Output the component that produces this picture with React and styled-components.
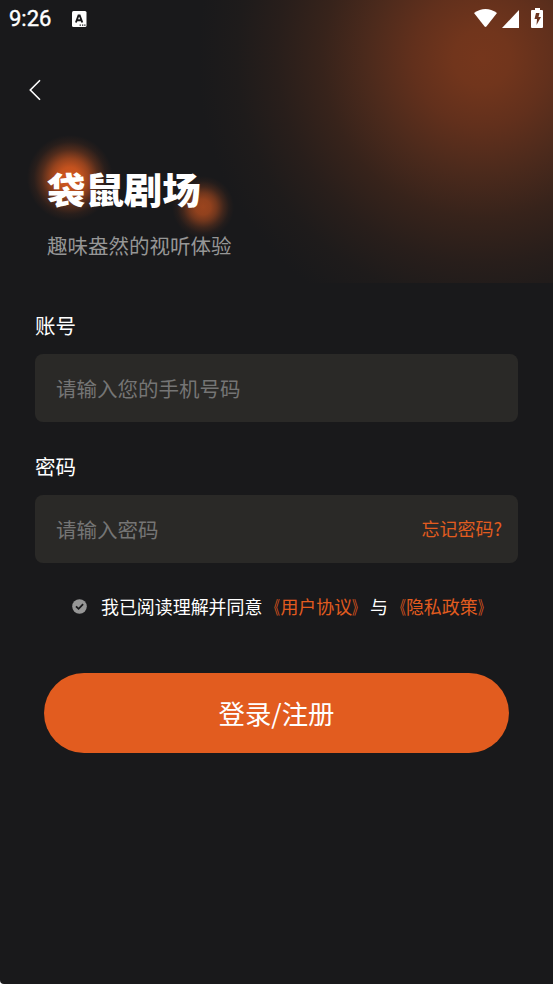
import React, { useState } from 'react';
import styled, { createGlobalStyle } from 'styled-components';

const GlobalStyle = createGlobalStyle`
  * {
    box-sizing: border-box;
  }

  body {
    margin: 0;
    background-color: #fff;
  }
`;

const Screen = styled.div`
  position: relative;
  display: flex;
  flex-direction: column;
  height: 984px;
  overflow: hidden;
  border-bottom-left-radius: 4px;
  background-color: #19191b;
  color: #fff;
  font-family: 'Noto Sans CJK SC', sans-serif;
`;

const TopGlow = styled.div`
  position: absolute;
  top: 0;
  right: 0;
  width: 353px;
  height: 283px;
  background: radial-gradient(
    circle 285px at 282px 58px,
    #75361c 0%,
    #71351c 10%,
    #62301c 24%,
    #4c2a1c 40%,
    #37231b 56%,
    #281e1b 72%,
    #1e1b1b 86%,
    #19191b 100%
  );
`;

const StatusBar = styled.header`
  position: relative;
  display: flex;
  align-items: center;
  height: 38px;
  padding: 0 9px 0 9px;
`;

const Time = styled.span`
  width: 62px;
  font-family: Roboto, sans-serif;
  font-size: 22px;
  font-weight: 400;
  line-height: 38px;
  -webkit-text-stroke: 0.4px #fff;
`;

const StatusIcons = styled.div`
  display: flex;
  margin: -2px 0 0 auto;
`;

const BackButton = styled.button`
  position: relative;
  display: flex;
  width: 30px;
  height: 30px;
  margin: 37px 0 0 20px;
  padding: 0;
  border: none;
  background: none;
  color: #fff;
  cursor: pointer;
`;

const Brand = styled.div`
  position: relative;
  margin: 55px 0 0 47px;
`;

const Glow = styled.div`
  position: absolute;
  left: ${(props) => props.$x - props.$size / 2}px;
  top: ${(props) => props.$y - props.$size / 2}px;
  width: ${(props) => props.$size}px;
  height: ${(props) => props.$size}px;
  background: radial-gradient(
    circle closest-side,
    rgba(226, 92, 31, 0.92) 0%,
    rgba(226, 92, 31, 0.85) 25%,
    rgba(226, 92, 31, 0.62) 45%,
    rgba(226, 92, 31, 0.28) 66%,
    rgba(226, 92, 31, 0.08) 84%,
    rgba(226, 92, 31, 0) 100%
  );
  opacity: ${(props) => props.$opacity || 1};
`;

const Title = styled.h1`
  position: relative;
  margin: 0;
  font-size: 38.4px;
  font-weight: 900;
  line-height: 56px;
  transform: scaleY(0.95);
`;

const Subtitle = styled.p`
  position: relative;
  margin: 14px 0 0;
  color: #969696;
  font-size: 20.5px;
  font-weight: 400;
  line-height: 30px;
`;

const Form = styled.form`
  display: flex;
  flex-direction: column;
  padding: 49px 35px 0;
`;

const Field = styled.div`
  display: flex;
  flex-direction: column;
  margin-bottom: 28px;
`;

const Label = styled.label`
  margin-bottom: 13px;
  font-size: 20.5px;
  line-height: 32px;
`;

const InputBox = styled.div`
  display: flex;
  align-items: center;
  height: 68px;
  padding: 0 16px 0 21px;
  border-radius: 8px;
  background-color: #2a2927;
`;

const Input = styled.input`
  flex: 1;
  min-width: 0;
  height: 40px;
  padding: 0;
  border: none;
  outline: none;
  background: none;
  color: #fff;
  font-family: inherit;
  font-size: 20.5px;

  &::placeholder {
    color: #757575;
    opacity: 1;
  }
`;

const ForgotLink = styled.a`
  margin-top: -2px;
  color: #e25c1f;
  font-size: 18px;
  line-height: 28px;
  cursor: pointer;
`;

const Agreement = styled.div`
  display: flex;
  align-items: center;
  height: 28px;
  margin-top: 2px;
  padding-left: 37px;
  font-size: 17.95px;
  line-height: 28px;
  white-space: nowrap;
`;

const AgreementText = styled.span`
  margin-top: -2px;
`;

const Check = styled.button`
  display: flex;
  width: 15px;
  height: 15px;
  margin: -2px 14px 0 0;
  padding: 0;
  border: none;
  background: none;
  cursor: pointer;
`;

const Policy = styled.a`
  color: #e25c1f;
`;

// narrow brackets that hug the name they wrap
const Bracket = styled.span`
  display: inline-block;
  transform: scaleX(0.66);
  transform-origin: ${(props) => props.$side} center;
`;

const SubmitButton = styled.button`
  height: 80px;
  margin: 52px 9px 0;
  padding: 0;
  border: none;
  border-radius: 40px;
  background-color: #e25c1f;
  color: #fff;
  font-family: inherit;
  font-size: 26.4px;
  line-height: 80px;
  cursor: pointer;
`;

const PolicyLink = ({ name }) => (
  <Policy>
    <Bracket $side="right">《</Bracket>
    {name}
    <Bracket $side="left">》</Bracket>
  </Policy>
);

const App = () => {
  const [account, setAccount] = useState('');
  const [password, setPassword] = useState('');
  const [agreed, setAgreed] = useState(true);

  const handleSubmit = (event) => {
    event.preventDefault();
  };

  return (
    <Screen lang="zh-CN">
      <GlobalStyle />
      <TopGlow />
      <StatusBar>
        <Time>9:26</Time>
        <svg width="16" height="17" viewBox="0 0 16 17">
          <rect x="1" y="0" width="14.5" height="16" rx="1.5" fill="#fff" />
          <path d="M4.9 11.5L7.5 4.5h1.2L11.3 11.5M5.9 9.2h4.4" fill="none" stroke="#19191b" strokeWidth="1.9" />
          <path d="M8.6 14.2h1.3M11 14.2h1.3M13.2 14.2h1.3" stroke="#19191b" strokeWidth="1.2" />
        </svg>
        <StatusIcons>
          <svg width="70" height="22" viewBox="474 7 70 22" fill="#fff">
            <path d="M474 13Q485.5 5 497 13L486.4 26.5Q485.5 27.3 484.6 26.5Z" />
            <path d="M519 10V28H502Z" />
            <path d="M535 8h5v2h2q1 0 1 1v16q0 1-1 1h-10q-1 0-1-1v-16q0-1 1-1h3z" />
            <path d="M536 13h3.5l-1 4h2.5l-4.5 8 .5-6h-2.5z" fill="#6b3520" />
          </svg>
        </StatusIcons>
      </StatusBar>
      <BackButton type="button" aria-label="返回">
        <svg width="30" height="30" viewBox="0 0 30 30" fill="none" stroke="currentColor" strokeWidth="1.6">
          <path d="M20 5.3L10.3 15L20 24.7" />
        </svg>
      </BackButton>
      <Brand>
        <Glow $x={23} $y={18} $size={86} />
        <Glow $x={156} $y={47} $size={62} $opacity={0.7} />
        <Title>袋鼠剧场</Title>
        <Subtitle>趣味盎然的视听体验</Subtitle>
      </Brand>
      <Form onSubmit={handleSubmit}>
        <Field>
          <Label htmlFor="account">账号</Label>
          <InputBox>
            <Input
              type="text"
              id="account"
              placeholder="请输入您的手机号码"
              value={account}
              onChange={(e) => setAccount(e.target.value)}
            />
          </InputBox>
        </Field>
        <Field>
          <Label htmlFor="password">密码</Label>
          <InputBox>
            <Input
              type="password"
              id="password"
              placeholder="请输入密码"
              value={password}
              onChange={(e) => setPassword(e.target.value)}
            />
            <ForgotLink>忘记密码?</ForgotLink>
          </InputBox>
        </Field>
        <Agreement>
          <Check type="button" aria-label="同意" onClick={() => setAgreed(!agreed)}>
            <svg width="15" height="15" viewBox="0 0 15 15">
              <circle cx="7.5" cy="7.5" r="7.3" fill="#969696" />
              {agreed && <path d="M4 7.3L6.6 9.8L11.1 5.2" fill="none" stroke="#19191b" strokeWidth="1.8" />}
            </svg>
          </Check>
          <AgreementText>
            我已阅读理解并同意
            <PolicyLink name="用户协议" />
            与
            <PolicyLink name="隐私政策" />
          </AgreementText>
        </Agreement>
        <SubmitButton type="submit">登录/注册</SubmitButton>
      </Form>
    </Screen>
  );
};

export default App;
